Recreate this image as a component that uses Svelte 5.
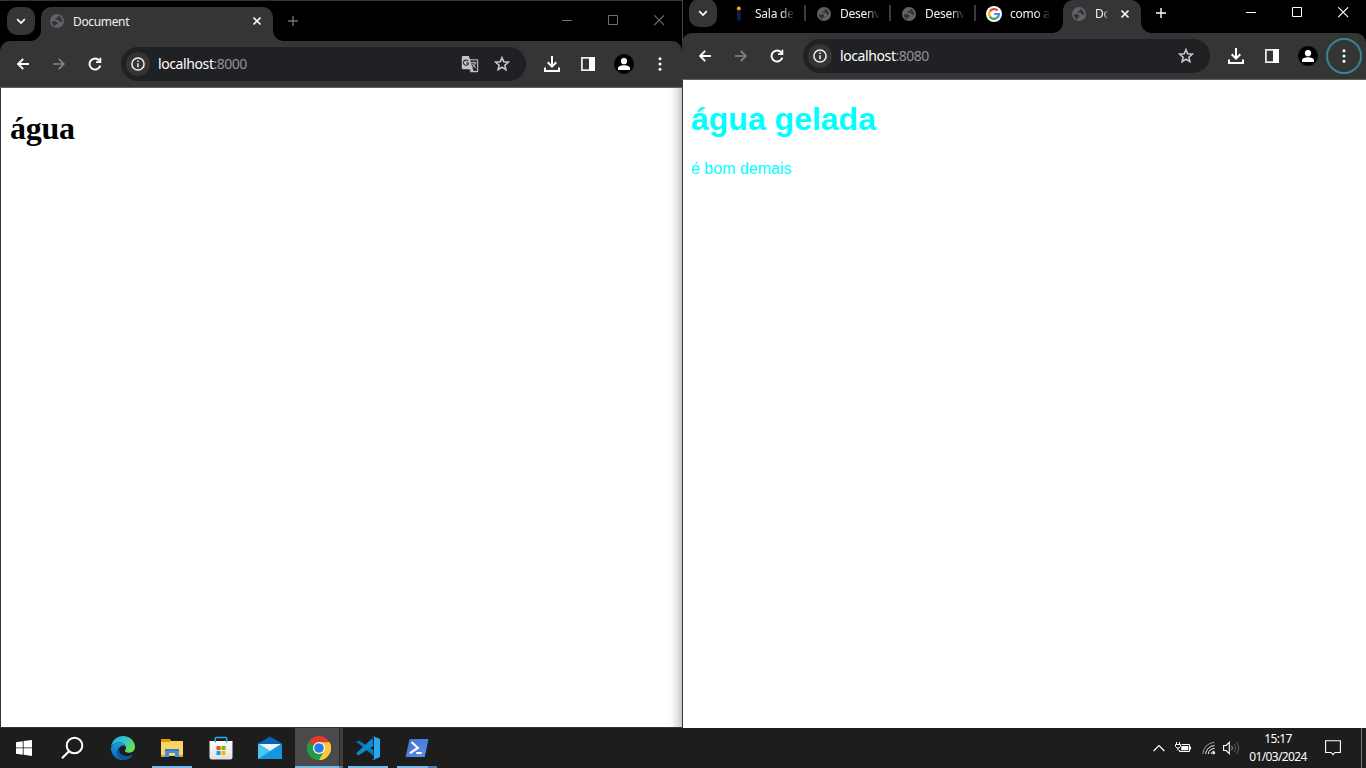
<script>
  const first = {
    kind: 'back',
    port: '8000',
    translate: true,
    tabs: [{ icon: 'globe', title: 'Document', active: true }]
  };
  const second = {
    kind: 'front',
    port: '8080',
    translate: false,
    tabs: [
      { icon: 'sala', title: 'Sala de' },
      { icon: 'globe', title: 'Desenv' },
      { icon: 'globe', title: 'Desenv' },
      { icon: 'google', title: 'como a' },
      { icon: 'globe', title: 'Do', active: true }
    ]
  };
</script>

{#snippet favicon(name)}
  {#if name === 'globe'}
    <svg class="fav" width="14" height="14" viewBox="0 0 14 14">
      <circle cx="7" cy="7" r="7" fill="#5f6368" />
      <path d="M2 7.2h3.1c1.4 0 2.3.8 2.3 2.1v.9H5.6v2.1C3.3 11.7 1.8 9.700 2 7.200ZM7.800 1.800v1.300c0 .8-.6 1.300-1.400 1.300H5.500v1.300h2.800c.8 0 1.100.6 1.100 1.300v.7h1.200c.8 0 1.200.4 1.300 1 .7-2.700-.9-6.100-4.100-6.900Z" fill="#303235" />
    </svg>
  {:else if name === 'sala'}
    <svg class="fav" width="14" height="16" viewBox="0 0 14 16">
      <circle cx="6.8" cy="2.400" r="2" fill="#f7a600" />
      <path d="M5 5.500h3.600V13l.4 1.500H5.400L5.200 13V7Z" fill="#082552" />
    </svg>
  {:else}
    <svg class="fav" width="16" height="16" viewBox="0 0 16 16">
      <circle cx="8" cy="8" r="8" fill="#fff" />
      <g fill="none" stroke-width="2.200">
        <path d="M3.900 5.400A4.900 4.900 0 0 1 11.600 4.600" stroke="#ea4335" />
        <path d="M3.900 10.600A4.900 4.900 0 0 1 3.900 5.400" stroke="#fbbc05" />
        <path d="M11.200 11.700A4.900 4.900 0 0 1 3.900 10.600" stroke="#34a853" />
        <path d="M8.200 8h4.700A4.900 4.900 0 0 1 11.200 11.700" stroke="#4285f4" />
      </g>
    </svg>
  {/if}
{/snippet}

{#snippet browser(win)}
  <div class="strip">
    <div class="search-tabs">
      <svg width="10" height="10" viewBox="0 0 10 10"><path d="M1.200 3.200 5 7l3.800-3.800" fill="none" stroke="#fff" stroke-width="1.700" /></svg>
    </div>
    <div class="tabs">
      {#each win.tabs as tab, i}
        <div class="tab" class:active={tab.active}>
          <span class="favbox">{@render favicon(tab.icon)}</span>
          <span class="title">{tab.title}</span>
          {#if tab.active}
            <svg class="x" width="8" height="8" viewBox="0 0 8 8"><path d="m.5.5 7 7m0-7-7 7" stroke="#f1f1f1" stroke-width="1.600" /></svg>
          {:else if i < win.tabs.length - 2}
            <span class="sep"></span>
          {/if}
        </div>
      {/each}
    </div>
    <svg class="plus" width="10" height="10" viewBox="0 0 10 10"><path d="M5 0v10M0 5h10" stroke="currentColor" stroke-width="1.400" /></svg>
    <div class="controls">
      <svg width="11" height="11" viewBox="0 0 11 11"><path d="M0 5.500h10" stroke="currentColor" /></svg>
      <svg width="11" height="11" viewBox="0 0 11 11"><path d="M.5.5h9v9h-9z" fill="none" stroke="currentColor" /></svg>
      <svg width="11" height="11" viewBox="0 0 11 11"><path d="m.3.3 9.800 9.800m0-9.800L.3 10.100" fill="none" stroke="currentColor" stroke-width="1.100" /></svg>
    </div>
  </div>
  <div class="toolbar">
    <span class="btn"><svg width="12" height="12" viewBox="0 0 12 12"><path d="M12 6H1.400M6.200.8 1.100 6l5.100 5.200" fill="none" stroke="#fff" stroke-width="1.800" /></svg></span>
    <span class="btn"><svg width="12" height="12" viewBox="0 0 12 12"><path d="M0 6h10.600M5.800.8 10.900 6l-5.100 5.200" fill="none" stroke="#858585" stroke-width="1.700" /></svg></span>
    <span class="btn"><svg width="14" height="14" viewBox="0 0 14 14"><path d="M12.300 8.600A5.500 5.500 0 1 1 11.200 3.400l1.300 1.500" fill="none" stroke="#fff" stroke-width="1.900" /><path d="M13.300.7V6H8V4.200h3.500V.7Z" fill="#fff" /></svg></span>
    <div class="omnibox">
      <span class="info"><svg width="14" height="14" viewBox="0 0 14 14"><circle cx="7" cy="7" r="6.100" fill="none" stroke="#f1f1f1" stroke-width="1.500" /><path d="M7 6.200v4M7 3.600v1.500" stroke="#f1f1f1" stroke-width="1.500" /></svg></span>
      <span class="url">localhost<i>:{win.port}</i></span>
      <span class="grow"></span>
      {#if win.translate}
        <span class="obtn">
          <svg width="18" height="18" viewBox="0 0 18 18">
            <path d="M2 1h5.800l1.100 3.300H16a1.200 1.200 0 0 1 1.200 1.200V16a1.200 1.200 0 0 1-1.200 1.200H9.600l-1-3H2A1.200 1.200 0 0 1 .8 13V2.200A1.200 1.200 0 0 1 2 1Z" fill="#c4c4c4" />
            <path d="m9.300 5.300 3.100 10.800H16.100V5.300Z" fill="#2d2e30" />
            <path d="M7.200 6.200A2.600 2.600 0 1 0 7.600 8H5.200" fill="none" stroke="#303134" stroke-width="1.200" />
            <path d="M10.100 7.800h5.300M12.700 6.700v1.100M14.300 7.800c-.3 2-1.600 3.600-3 4.600M11.400 9c.7 1.400 2 2.700 3.500 3.700" fill="none" stroke="#c4c4c4" />
            <path d="m9.500 17 2.300-2.800H8.500Z" fill="#aaa" />
          </svg>
        </span>
      {/if}
      <span class="obtn"><svg width="16" height="16" viewBox="0 0 16 16"><path d="m8 1.700 1.750 4.150 4.500.4-3.400 2.950 1 4.400L8 11.250l-3.850 2.350 1-4.400-3.400-2.950 4.500-.4Z" fill="none" stroke="#c7c7c7" stroke-width="1.600" /></svg></span>
    </div>
    <span class="btn"><svg width="16" height="16" viewBox="0 0 16 16"><path d="M8 0v10.400M3.700 6.300 8 10.600l4.300-4.300M1 11.500V15h14v-3.500" fill="none" stroke="#fff" stroke-width="2" /></svg></span>
    <span class="btn"><svg width="16" height="16" viewBox="0 0 16 16"><path d="M1.900 1.900h12.200v12.200H1.900z" fill="none" stroke="#e8e8e8" stroke-width="1.800" /><path d="M9 1h5.800v14H9z" fill="#fff" /></svg></span>
    <span class="btn"><svg width="20" height="20" viewBox="0 0 20 20"><circle cx="10" cy="10" r="10" fill="#000" /><circle cx="10" cy="7.200" r="3.100" fill="#fff" /><path d="M4 16v-1.800c0-2 3-3 6-3s6 1 6 3V16Z" fill="#fff" /></svg></span>
    <span class="btn more"><svg width="4" height="14" viewBox="0 0 4 14" fill="#fff"><circle cx="2" cy="1.700" r="1.500" /><circle cx="2" cy="7" r="1.500" /><circle cx="2" cy="12.300" r="1.500" /></svg></span>
  </div>
{/snippet}

<div class="desktop">
  <div class="windows">
    <section class="window {first.kind}">
      {@render browser(first)}
      <main class="page"><h1>água</h1></main>
    </section>
    <section class="window {second.kind}">
      {@render browser(second)}
      <main class="page"><h1>água gelada</h1><p>é bom demais</p></main>
    </section>
  </div>

  <footer class="taskbar">
    <span class="task start"><svg width="16" height="16" viewBox="0 0 16 16" fill="#fff"><path d="M0 2.200 6.800 1.200v6.300H0zM7.600 1.100 16 0v7.500H7.600zM0 8.300h6.800v6.400L0 13.700zM7.600 8.300H16V16l-8.400-1.200z" /></svg></span>
    <span class="task find"><svg width="24" height="24" viewBox="0 0 24 24"><circle cx="14.500" cy="9.500" r="7.800" fill="none" stroke="#fff" stroke-width="2" /><path d="m9 15.200-7 7" stroke="#fff" stroke-width="2.300" /></svg></span>
    <span class="task"><svg width="24" height="24" viewBox="0 0 24 24">
      <defs>
        <linearGradient id="eg" x1="0" y1="0" x2="1" y2=".6"><stop offset="0" stop-color="#2aa9e0" /><stop offset=".5" stop-color="#30c3d2" /><stop offset="1" stop-color="#68e34c" /></linearGradient>
        <linearGradient id="eb" x1="0" y1="0" x2="0" y2="1"><stop offset="0" stop-color="#1b9de2" /><stop offset="1" stop-color="#0c63b8" /></linearGradient>
      </defs>
      <path d="M.2 10.500C1 4.500 6 0 12.200 0 19 0 24 5 24 11c0 3.500-2.600 5.700-5.800 5.700-2.800 0-4.300-1-4.300-2 0-.8 1.200-1.200 1.200-3C15.100 8.900 12 6.500 8.100 6.500 4.600 6.500 1.500 8.200.2 10.500Z" fill="url(#eg)" />
      <path d="M.1 11.500C1.600 8.200 4.800 6.400 8.200 6.400c3.800 0 6.800 2.300 6.900 5-.8-1.300-2-1.900-3.300-1.900-2.400 0-3.900 2.200-3.900 4.600 0 4 3.700 6.400 8 6.400 2.400 0 4.300-.6 5.900-1.500C19.700 22.100 16.200 24 12 24 5.100 24-.6 18.400.1 11.500Z" fill="url(#eb)" />
      <path d="M9.300 10.400C6.600 12 5.600 14.500 6 17c.6 3.800 3.700 6.500 7.500 6.900 3.200-.4 6.100-2 8.100-4.500.4-.6 0-.8-.4-.6-1.600.8-3.500 1.200-5.300 1.200-4.400 0-8-2.400-8-6.200 0-1.300.5-2.600 1.400-3.400Z" fill="#1250a0" />
    </svg></span>
    <span class="task run"><svg width="22" height="20" viewBox="0 0 22 20">
      <path d="M0 1h8.500l1.500 2H22v15H0Z" fill="#f6c446" /><path d="M0 1h8.500L10 3 8.500 4H0Z" fill="#e29a0c" /><path d="M0 4h8.500L10 3.200h12V18H0Z" fill="#fcd364" />
      <path d="M4 11h14v8h-4v-4H8v4H4z" fill="#3b95d9" /><path d="M4 11h14v2H4z" fill="#2f7fc6" /><path d="M0 17h4v2H0zm18 0h4v2h-4z" fill="#d9a730" />
    </svg></span>
    <span class="task"><svg width="24" height="24" viewBox="0 0 24 24">
      <defs><linearGradient id="st" x2="0" y2="1"><stop stop-color="#fff" /><stop offset="1" stop-color="#dfdfdf" /></linearGradient></defs>
      <path d="M.5 5h23v16a2.500 2.500 0 0 1-2.500 2.500H3A2.500 2.500 0 0 1 .5 21Z" fill="url(#st)" /><path d="M6.300 6.500V2.200c0-.5.3-.8.800-.8h9.800c.5 0 .8.300.8.800v4.300" fill="none" stroke="#22aee6" stroke-width="1.500" />
      <path d="M7.500 10h4v4h-4z" fill="#f04e23" /><path d="M12.500 10h4v4h-4z" fill="#7fba00" /><path d="M7.500 15h4v4h-4z" fill="#109be5" /><path d="M12.500 15h4v4h-4z" fill="#ffb900" />
    </svg></span>
    <span class="task"><svg width="24" height="24" viewBox="0 0 24 24">
      <path d="m0 7.500 12-7 12 7V15H0Z" fill="#0b61b2" /><path d="M2 8h20v7H2Z" fill="#eef2f4" /><path d="m0 7.500 12 7.500L24 7.500V23H0Z" fill="#31b6ee" /><path d="M24 7.500 0 23h24Z" fill="#1596df" /><path d="m0 7.500 12 7.500L0 23Z" fill="#48c7f5" />
    </svg></span>
    <span class="task chrome"><svg width="24" height="24" viewBox="0 0 24 24">
      <path d="M12 12 1.600 6A12 12 0 0 1 22.400 6Z" fill="#e33b2e" /><path d="M12 12 22.400 6A12 12 0 0 1 12 24Z" fill="#fdc93a" /><path d="M12 12v12A12 12 0 0 1 1.600 6Z" fill="#249a43" />
      <path d="M12 6.200h10.500A12 12 0 0 1 12 24l5-9Z" fill="#fdc93a" /><path d="M1.600 6 7 15l5 3 4.900-2.800L12 24A12 12 0 0 1 1.600 6Z" fill="#249a43" />
      <circle cx="12" cy="12" r="6" fill="#fff" /><circle cx="12" cy="12" r="4.800" fill="#267ced" />
    </svg></span>
    <span class="task run"><svg width="24" height="24" viewBox="0 0 24 24">
      <path d="M1.500 6.500 17.500 20v-6L3.200 4.800c-.6-.3-1 0-1.500.4l-1.200 1c-.4.400 0 .8 0 .8Z" fill="#0879bd" /><path d="m.5 17 16-15 1 7.800L3.200 19.100c-.5.400-1 .2-1.500-.3L.5 17.800c-.3-.3-.3-.5 0-.8Z" fill="#1187cb" />
      <path d="M17.500.2 24 3v18l-6.500 2.900c-.7.200-1.300 0-1.700-.5.800.6 2.200.1 2.200-1.200V1.800c0-1.300-1.400-1.800-2.200-1.200.4-.5 1-.7 1.700-.4Z" fill="#2aa7ef" />
    </svg></span>
    <span class="task run ps"><svg width="24" height="20" viewBox="0 0 24 20">
      <defs><linearGradient id="pw" x2="1" y2="1"><stop stop-color="#3f6fca" /><stop offset="1" stop-color="#5e91ed" /></linearGradient></defs>
      <path d="M4.500 1h19L19.700 19H.6Z" fill="url(#pw)" /><path d="m6.500 4 6.300 5.800-8 5.600" fill="none" stroke="#fff" stroke-width="2.200" /><path d="M11.300 15h5.400" stroke="#fff" stroke-width="2" />
    </svg></span>
    <div class="tray">
      <span class="chev"><svg width="12" height="8" viewBox="0 0 12 8"><path d="m.6 7 5.400-5.400L11.400 7" fill="none" stroke="#fff" stroke-width="1.200" /></svg></span>
      <span class="bat"><svg width="16" height="12" viewBox="0 0 16 12"><path d="M6.500 2.500h8v7h-10V8M15.500 4.500v3" fill="none" stroke="#fff" /><path d="M6.500 4h6.800v4.200H6z" fill="#fff" /><path d="M1.500 0v2M4.500 0v2" stroke="#fff" /><path d="M.5 2.500h5v2L4 6H2L.5 4.500ZM3 6v2.500" fill="#1c1c1c" stroke="#fff" /></svg></span>
      <span class="wifi"><svg width="14" height="14" viewBox="0 0 14 14" fill="none" stroke="#eee"><path d="M.7 13A12.500 12.500 0 0 1 12.300 1.300" stroke="#999" /><path d="M3.500 13a9.500 9.500 0 0 1 9-8.400M6.300 13a6.500 6.500 0 0 1 6.200-5.500M9 13a3.500 3.500 0 0 1 3.500-2.800" /><circle cx="11.800" cy="12" r="1" fill="#fff" /></svg></span>
      <span class="vol"><svg width="17" height="14" viewBox="0 0 17 14" fill="none"><path d="M.6 4.500h2.600L6.300 1.300v11.400L3.200 9.500H.6Z" stroke="#fff" stroke-width="1.100" /><path d="M8.500 4.800c1 1.200 1 3.200 0 4.400" stroke="#aaa" /><path d="M10.900 3c2 2.200 2 5.800 0 8M13.300 1c3 3.300 3 8.700 0 12" stroke="#666" /></svg></span>
      <time><span>15:17</span><span class="date">01/03/2024</span></time>
      <span class="note"><svg width="16" height="16" viewBox="0 0 16 16"><path d="M.6.700h14.800v11.800H10L8 14.700l-2-2.200H.6Z" fill="none" stroke="#fff" stroke-width="1.100" /></svg></span>
      <span class="peek"></span>
    </div>
  </footer>
</div>

<style>
  :global(body) { margin: 0; overflow: hidden; background: #000; }
  .desktop { width: 1366px; height: 768px; display: flex; flex-direction: column; font-family: "Noto Sans", "Open Sans", sans-serif; }
  svg { display: block; flex: none; }
  .windows { display: grid; grid-template-columns: 682px 684px; height: 728px; }
  .window { display: flex; flex-direction: column; min-width: 0; box-sizing: border-box; background: #000; height: 728px; }
  .strip { display: flex; flex: none; padding-left: 7px; box-sizing: border-box; }
  .back .strip { height: 41px; padding-top: 7px; box-shadow: inset 0 1px #343434; color: #707070; }
  .front .strip { height: 33px; color: #fff; }
  .search-tabs { width: 28px; height: 28px; border-radius: 10px; background: #353535; display: flex; align-items: center; justify-content: center; margin-right: 6px; flex: none; }
  .front .search-tabs { margin-top: -1px; }
  .tabs { display: flex; }
  .tab { width: 85px; box-sizing: border-box; display: flex; align-items: center; position: relative; padding: 0 8px; height: 28px; color: #f1f1f1; font-size: 12px; }
  .front .tab { height: 27px; }
  .favbox { width: 16px; flex: none; display: flex; justify-content: center; }
  .title { margin-left: 8px; flex: 1; white-space: nowrap; overflow: hidden; letter-spacing: -0.35px; line-height: 18px; padding-top: 1px; }
  .front .title { flex: none; width: 42px; letter-spacing: -0.25px; mask-image: linear-gradient(90deg, #000 62%, transparent 95%); }
  .sep { position: absolute; right: 2px; top: 5px; width: 2px; height: 16px; background: #3a3a3a; }
  .tab.active { background: #353535; border-radius: 10px 10px 0 0; }
  .back .tab.active { width: 232px; height: 34px; padding-bottom: 6px; padding-right: 12px; }
  .back .title { padding-top: 2px; }
  .front .tab.active { width: 78px; height: 33px; padding-bottom: 6px; padding-right: 12px; }
  .front .active .title { width: 14px; margin-right: 12px; }
  .tab.active::before, .tab.active::after { content: ""; position: absolute; bottom: 0; width: 10px; height: 10px; }
  .tab.active::before { left: -10px; background: radial-gradient(circle at 0 0, transparent 9.5px, #353535 10px); }
  .tab.active::after { right: -10px; background: radial-gradient(circle at 100% 0, transparent 9.5px, #353535 10px); }
  .plus { margin: 9px 0 0 15px; }
  .front .plus { margin-top: 8px; }
  .controls { margin-left: auto; display: flex; gap: 35px; padding: 8px 17px 0 0; }
  .front .controls { padding-top: 7px; }
  .toolbar { height: 47px; flex: none; display: flex; align-items: center; box-sizing: border-box; padding: 0 4px 1px 5px; background: #353535; border-bottom: 1px solid #616161; border-radius: 10px 10px 0 0; }
  .btn { width: 36px; height: 36px; flex: none; display: flex; align-items: center; justify-content: center; }
  .omnibox { flex: 1; height: 34px; border-radius: 17px; background: #202124; margin: 0 8px; display: flex; align-items: center; padding: 0 8px 0 5px; min-width: 0; box-sizing: border-box; }
  .info { width: 24px; height: 24px; border-radius: 50%; background: #353535; display: flex; align-items: center; justify-content: center; }
  .url { margin-left: 8px; font-size: 14px; line-height: 20px; color: #fff; letter-spacing: -0.4px; }
  .url i { font-style: normal; color: #929292; letter-spacing: -0.55px; }
  .grow { flex: 1; }
  .obtn { width: 32px; display: flex; justify-content: center; }
  .front .more { border: 2px solid #378690; border-radius: 50%; box-sizing: border-box; }
  .page { flex: 1; background: #fff; padding: 0 8px; overflow: hidden; }
  .back .page { border-left: 1px solid #343434; border-bottom: 1px solid #343434; padding-left: 9px; background: linear-gradient(270deg, #c8c8c8, #e4e4e4 5px, #f8f8f8 10px, #fff 15px); font-family: "Liberation Serif", serif; }
  .front .page { border-left: 1px solid #343434; color: #0ff; font-family: "Liberation Sans", Arial, sans-serif; }
  .front { box-shadow: inset 1px 0 #444; }
  h1 { font-size: 32px; line-height: normal; margin: 21px 0; }
  .back h1 { margin-top: 22px; letter-spacing: -0.3px; }
  .front h1 { margin-bottom: 22px; }
  p { font-size: 16px; line-height: normal; margin: 0; }
  .taskbar { height: 40px; display: flex; background: #1d1d1d; }
  .task { width: 49px; height: 40px; flex: none; display: flex; align-items: center; justify-content: center; position: relative; }
  .start { width: 48px; }
  .find { width: 48px; margin-right: 2px; }
  .run::after, .chrome::after { content: ""; position: absolute; bottom: 0; left: 5px; width: 40px; height: 2px; background: #76b9ed; }
  .ps::after { background: linear-gradient(90deg, #76b9ed 31px, #4d7da5 31px); }
  .chrome { background: linear-gradient(90deg, transparent 3px, #4a4a4a 3px 47px, #272727 47px 48px, #3d3d3d 48px); width: 51px; margin-left: -2px; padding-left: 2px; box-sizing: border-box; }
  .chrome::after { left: 3px; width: 48px; background: linear-gradient(90deg, #76b9ed 44px, #4d7da5 44px); }
  .tray { margin-left: auto; display: flex; align-items: center; color: #fff; }
  .bat { margin-left: 10px; }
  .wifi { margin-left: 11px; }
  .vol { margin-left: 7px; }
  time { display: flex; flex-direction: column; text-align: center; width: 60px; margin-left: 8px; font-size: 12px; line-height: 18px; letter-spacing: -0.65px; white-space: nowrap; }
  .note { margin-left: 17px; }
  .peek { width: 1px; height: 40px; background: #777; margin: 0 4px 0 20px; }
</style>
